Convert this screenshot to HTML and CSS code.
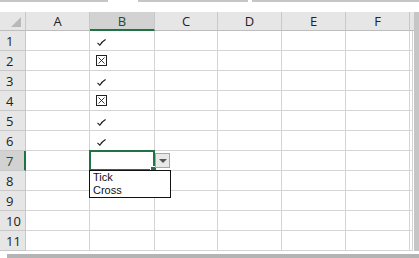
FILE: index.html
```html
<!DOCTYPE html>
<html lang="en">
<head>
    <meta charset="UTF-8">
    <title>Tick and Cross list</title>
    <link rel="stylesheet" href="styles.css">
</head>
<body>
    <div class="window">
        <div class="tabs">
            <span class="tab tab-one"></span>
            <span class="tab-gap"></span>
            <span class="tab tab-two"></span>
            <span class="tab-gap small"></span>
            <span class="tab tab-three"></span>
        </div>

        <div class="frame">
            <div class="sheet">
                <div class="corner"><span class="corner-mark"></span></div>
                <div class="col-head">A</div>
                <div class="col-head active">B</div>
                <div class="col-head">C</div>
                <div class="col-head">D</div>
                <div class="col-head">E</div>
                <div class="col-head">F</div>
                <div class="col-head rest"></div>

                <div class="row-head">1</div>
                <div class="cell"></div>
                <div class="cell"><svg class="tick" viewBox="0 0 9 7"><path d="M0.5 3.8 L2.8 6.2 Q5 2.5 8.6 0.4" fill="none" stroke="#222" stroke-width="1.1"/></svg></div>
                <div class="cell"></div><div class="cell"></div><div class="cell"></div><div class="cell"></div><div class="cell rest"></div>

                <div class="row-head">2</div>
                <div class="cell"></div>
                <div class="cell"><svg class="box" viewBox="0 0 11 11"><rect x="0.5" y="0.5" width="10" height="10" fill="none" stroke="#222"/><path d="M2.5 2.5 L8.5 8.5 M8.5 2.5 L2.5 8.5" stroke="#222" stroke-width="0.9"/></svg></div>
                <div class="cell"></div><div class="cell"></div><div class="cell"></div><div class="cell"></div><div class="cell rest"></div>

                <div class="row-head">3</div>
                <div class="cell"></div>
                <div class="cell"><svg class="tick" viewBox="0 0 9 7"><path d="M0.5 3.8 L2.8 6.2 Q5 2.5 8.6 0.4" fill="none" stroke="#222" stroke-width="1.1"/></svg></div>
                <div class="cell"></div><div class="cell"></div><div class="cell"></div><div class="cell"></div><div class="cell rest"></div>

                <div class="row-head">4</div>
                <div class="cell"></div>
                <div class="cell"><svg class="box" viewBox="0 0 11 11"><rect x="0.5" y="0.5" width="10" height="10" fill="none" stroke="#222"/><path d="M2.5 2.5 L8.5 8.5 M8.5 2.5 L2.5 8.5" stroke="#222" stroke-width="0.9"/></svg></div>
                <div class="cell"></div><div class="cell"></div><div class="cell"></div><div class="cell"></div><div class="cell rest"></div>

                <div class="row-head">5</div>
                <div class="cell"></div>
                <div class="cell"><svg class="tick" viewBox="0 0 9 7"><path d="M0.5 3.8 L2.8 6.2 Q5 2.5 8.6 0.4" fill="none" stroke="#222" stroke-width="1.1"/></svg></div>
                <div class="cell"></div><div class="cell"></div><div class="cell"></div><div class="cell"></div><div class="cell rest"></div>

                <div class="row-head">6</div>
                <div class="cell"></div>
                <div class="cell"><svg class="tick" viewBox="0 0 9 7"><path d="M0.5 3.8 L2.8 6.2 Q5 2.5 8.6 0.4" fill="none" stroke="#222" stroke-width="1.1"/></svg></div>
                <div class="cell"></div><div class="cell"></div><div class="cell"></div><div class="cell"></div><div class="cell rest"></div>

                <div class="row-head active">7</div>
                <div class="cell"></div>
                <div class="cell selected">
                    <span class="fill-handle"></span>
                    <span class="drop-button"><span class="drop-arrow"></span></span>
                    <div class="drop-list">
                        <div>Tick</div>
                        <div>Cross</div>
                    </div>
                </div>
                <div class="cell"></div><div class="cell"></div><div class="cell"></div><div class="cell"></div><div class="cell rest"></div>

                <div class="row-head">8</div>
                <div class="cell"></div><div class="cell"></div><div class="cell"></div><div class="cell"></div><div class="cell"></div><div class="cell"></div><div class="cell rest"></div>

                <div class="row-head">9</div>
                <div class="cell"></div><div class="cell"></div><div class="cell"></div><div class="cell"></div><div class="cell"></div><div class="cell"></div><div class="cell rest"></div>

                <div class="row-head">10</div>
                <div class="cell"></div><div class="cell"></div><div class="cell"></div><div class="cell"></div><div class="cell"></div><div class="cell"></div><div class="cell rest"></div>

                <div class="row-head">11</div>
                <div class="cell"></div><div class="cell"></div><div class="cell"></div><div class="cell"></div><div class="cell"></div><div class="cell"></div><div class="cell rest"></div>
            </div>
            <div class="scroll-side"></div>
        </div>

        <div class="bottom">
            <span class="bottom-gap"></span>
            <span class="bottom-bar"></span>
        </div>
    </div>
</body>
</html>
```

FILE: styles.css
```css
body {
    margin: 0;
    background: #ffffff;
    font-family: "Open Sans", "Noto Sans", Arial, sans-serif;
}
.window {
    width: 419px;
    height: 258px;
    overflow: hidden;
    display: flex;
    flex-direction: column;
}
.tabs {
    display: flex;
    height: 2px;
    margin-bottom: 10px;
}
.tab {
    background: #c6c6c6;
}
.tab-one {
    width: 108px;
}
.tab-gap {
    width: 30px;
}
.tab-gap.small {
    width: 4px;
}
.tab-two {
    width: 110px;
}
.tab-three {
    flex: 1;
}
.frame {
    display: flex;
}
.sheet {
    flex: 1;
    display: grid;
    grid-template-columns: 26px 64px 65px 63px 64px 64px 64px 1fr;
    grid-template-rows: 19px repeat(11, 20px);
}
.corner {
    background: #e6e6e6;
    border-right: 1px solid #c8c8c8;
    border-bottom: 1px solid #bdbdbd;
    position: relative;
}
.corner-mark {
    position: absolute;
    right: 4px;
    bottom: 3px;
    width: 0;
    height: 0;
    border-left: 10px solid transparent;
    border-bottom: 10px solid #b9b9b9;
}
.col-head {
    background: #e6e6e6;
    border-right: 1px solid #c8c8c8;
    border-bottom: 1px solid #bdbdbd;
    box-sizing: border-box;
    text-align: center;
    font-size: 13px;
    line-height: 19px;
    color: #222;
}
.col-head.active {
    background: #d2d2d2;
    border-bottom: 2px solid #217346;
    color: #1d4d33;
}
.col-head.rest {
    border-right: none;
}
.row-head {
    background: #e6e6e6;
    border-right: 1px solid #c8c8c8;
    border-bottom: 1px solid #c8c8c8;
    box-sizing: border-box;
    font-size: 13px;
    line-height: 20px;
    padding-left: 6px;
    color: #222;
}
.row-head.active {
    background: #d2d2d2;
    border-right: 2px solid #217346;
    color: #1d4d33;
}
.cell {
    border-right: 1px solid #d4d4d4;
    border-bottom: 1px solid #d4d4d4;
    box-sizing: border-box;
    position: relative;
}
.cell.rest {
    border-right: 1px solid #d4d4d4;
    margin-right: 1px;
}
.tick {
    position: absolute;
    left: 7px;
    top: 8px;
    width: 9px;
    height: 7px;
}
.box {
    position: absolute;
    left: 6px;
    top: 4px;
    width: 11px;
    height: 11px;
}
.selected {
    border: 2px solid #217346;
    margin: -1px 0 0 -1px;
    z-index: 2;
}
.fill-handle {
    position: absolute;
    right: -4px;
    bottom: -4px;
    width: 5px;
    height: 5px;
    background: #217346;
    border: 1px solid #fff;
}
.drop-button {
    position: absolute;
    left: 64px;
    top: 1px;
    width: 15px;
    height: 15px;
    background: #e8e8e8;
    border: 1px solid #a6a6a6;
    box-sizing: border-box;
    display: flex;
    align-items: center;
    justify-content: center;
}
.drop-arrow {
    width: 0;
    height: 0;
    border-left: 4px solid transparent;
    border-right: 4px solid transparent;
    border-top: 4px solid #555;
}
.drop-list {
    position: absolute;
    left: -2px;
    top: 18px;
    width: 82px;
    height: 28px;
    box-sizing: border-box;
    background: #fff;
    border: 1px solid #111;
    padding: 0 0 0 3px;
    font-family: "Liberation Sans", Arial, sans-serif;
    font-size: 11px;
    line-height: 13px;
    color: #111;
    z-index: 3;
}
.scroll-side {
    width: 5px;
    background: #c6c6c6;
}
.bottom {
    display: flex;
    margin-top: 3px;
    height: 4px;
}
.bottom-gap {
    width: 7px;
}
.bottom-bar {
    flex: 1;
    background: #b4b4b4;
}
```
